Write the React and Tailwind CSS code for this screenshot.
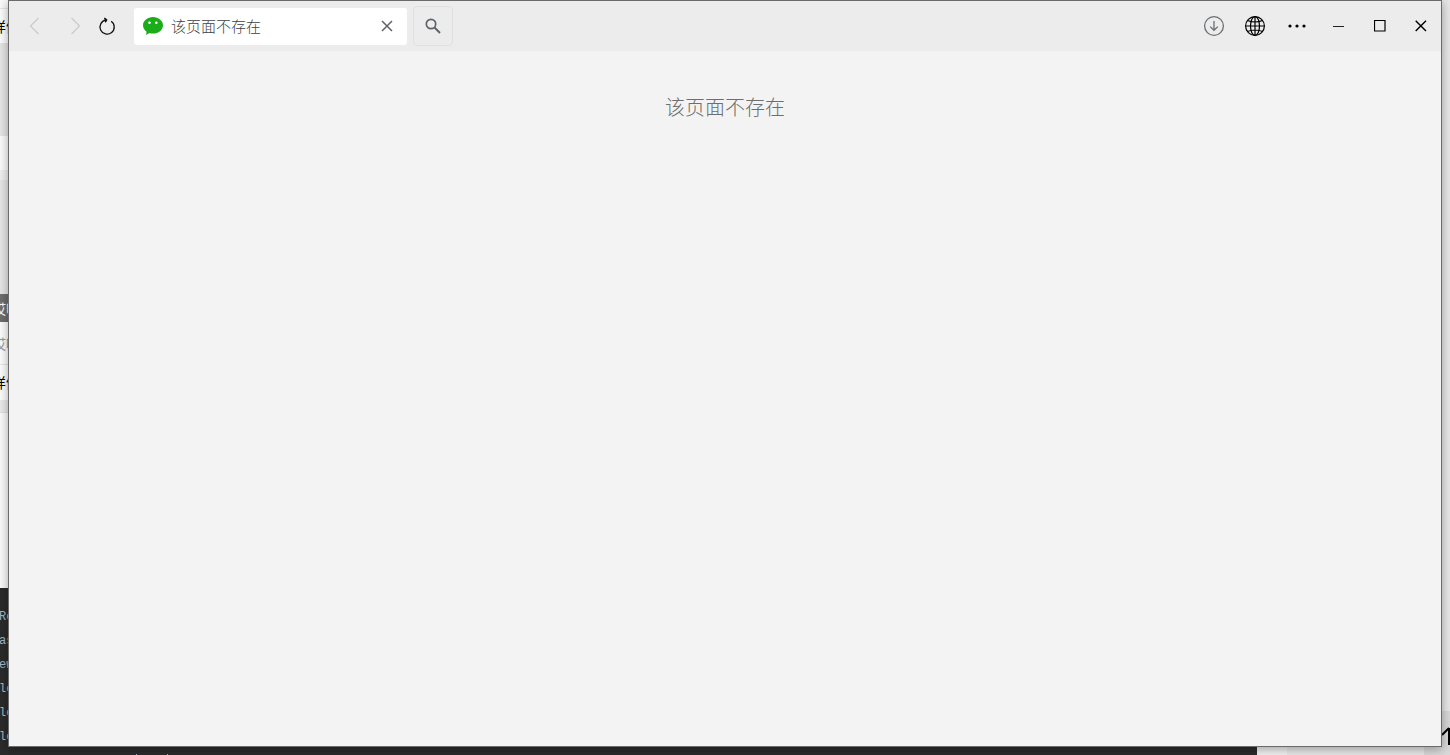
import React, { useState } from "react";

// Slices of the desktop that stay visible left of the window, top to bottom
const leftSlices = [
  { className: "h-2 bg-[#fafafa]" },
  { className: "h-[35px] bg-[#fdfdfd] border-t border-[#e6e6e6] text-black", text: "样例" },
  { className: "h-[93px] bg-[#e6e6e6]" },
  { className: "h-[34px] bg-[#fcfcfc]" },
  { className: "h-[10px] bg-[#f0f0f0]" },
  { className: "h-[114px] bg-[#e6e6e6]" },
  { className: "h-[28px] bg-[#6e6e6e] text-white", text: "哎呀" },
  { className: "h-[42px] bg-[#fdfdfd] text-[#999999]", text: "哎呀" },
  { className: "h-[36px] bg-[#fdfdfd] border-t border-[#e6e6e6] text-black", text: "样例" },
  { className: "h-[13px] bg-[#ebebeb] border-b border-[#e0e0e0]" },
  { className: "h-[175px] bg-[#fbfbfb]" },
];

const codeLines = ["Re", "as", "ew", "le", "le", "le"];

/**
 * Background content on the left edge, partly covered by the window.
 */
const LeftEdge = () => (
  <div className="flex w-2 shrink-0 flex-col overflow-hidden bg-[#2b2b2b]">
    {leftSlices.map((slice, index) => (
      <div
        key={index}
        className={`flex shrink-0 items-center text-[14px] ${slice.className}`}
      >
        {slice.text && (
          <span className="-ml-2 whitespace-nowrap">{slice.text}</span>
        )}
      </div>
    ))}
    <div className="min-h-0 flex-1 overflow-hidden pt-[17px] font-['Liberation_Mono','Noto_Sans_CJK_SC',monospace] text-[12px] leading-[24px] text-[#a9b7c6]">
      {codeLines.map((line, index) => (
        <div key={index} className="-ml-px">
          {line}
        </div>
      ))}
    </div>
  </div>
);

/**
 * Background content on the right edge with the "back to top" arrow.
 */
const RightEdge = () => (
  <div className="flex w-2 shrink-0 flex-col bg-[#e8e8e8]">
    <div className="flex-1" />
    <div className="flex h-9 items-end bg-[#d9d9d9]">
      <svg className="h-5 w-2" viewBox="0 0 8 20" fill="none" stroke="#000" strokeWidth="2">
        <path d="M0 8L7 1M7 1V18" />
      </svg>
    </div>
  </div>
);

/**
 * Background content below the window.
 */
const BottomEdge = () => (
  <div className="flex h-2 shrink-0">
    <div className="flex flex-1 items-end bg-[#2b2b2b] pl-[136px]">
      <span className="h-px w-px bg-[#a9b7c6]" />
      <span className="ml-[30px] h-px w-px bg-[#a9b7c6]" />
    </div>
    <div className="w-[30px] bg-[#f2f2f2]" />
    <div className="w-[137px] bg-[#e8e8e8]" />
    <div className="w-[26px] bg-[#d9d9d9]" />
  </div>
);

const WeChatIcon = () => (
  <svg className="h-5 w-5 shrink-0" viewBox="0 0 20 20">
    <path
      fill="#1aad19"
      d="M10 1C4.500 1 0 4.700 0 9.300c0 2.600 1.400 4.900 3.600 6.400L3.100 18.900 6.500 17c1.100.4 2.300.6 3.500.6 5.500 0 10-3.700 10-8.300S15.500 1 10 1z"
    />
    <circle cx="6.500" cy="6.700" r="1.300" fill="#fff" />
    <circle cx="13.300" cy="6.700" r="1.300" fill="#fff" />
  </svg>
);

const NavigationButtons = () => (
  <div className="flex items-center">
    <button type="button" aria-label="后退" disabled className="flex h-9 w-9 items-center justify-center">
      <svg className="h-5 w-5" viewBox="0 0 20 20" fill="none" stroke="#cccccc" strokeWidth="1.4">
        <path d="M13.500 2L5.500 10l8 8" />
      </svg>
    </button>
    <button type="button" aria-label="前进" disabled className="ml-1 flex h-9 w-9 items-center justify-center">
      <svg className="h-5 w-5" viewBox="0 0 20 20" fill="none" stroke="#cccccc" strokeWidth="1.4">
        <path d="M6.500 2l8 8-8 8" />
      </svg>
    </button>
    <button type="button" aria-label="刷新" className="flex h-9 w-7 items-center justify-center">
      <svg className="h-5 w-5" viewBox="0 0 20 20" fill="none" stroke="#111111" strokeWidth="1.3">
        <path d="M14.200 5.200A7.100 7.100 0 1 1 9 4" />
        <path d="M6.800 1.800L9.600 4 7.600 6.700z" transform="translate(.6 0)" fill="#111111" stroke="none" />
        <path d="M7.400 1.900L9.700 3.900 8.300 6.200" />
      </svg>
    </button>
  </div>
);

const WindowControls = () => (
  <div className="ml-auto flex items-center">
    <button type="button" aria-label="下载" className="flex h-9 w-[41px] items-center justify-center">
      <svg className="h-[22px] w-[22px]" viewBox="0 0 22 22" fill="none" stroke="#6b6e73" strokeWidth="1.3">
        <circle cx="11" cy="11" r="9.400" />
        <path d="M11 6v9.300M7.200 11.600L11 15.300l3.800-3.700" />
      </svg>
    </button>
    <button type="button" aria-label="用默认浏览器打开" className="flex h-9 w-[41px] items-center justify-center">
      <svg className="h-[22px] w-[22px]" viewBox="0 0 22 22" fill="none" stroke="#000" strokeWidth="1.2">
        <circle cx="11" cy="11" r="9.400" />
        <ellipse cx="11" cy="11" rx="4.500" ry="9.400" />
        <path d="M11 1.600v18.800M1.600 11h18.800M3.600 5.500c4 2 10.800 2 14.800 0M3.600 16.500c4-2 10.800-2 14.800 0" />
      </svg>
    </button>
    <button type="button" aria-label="更多" className="flex h-9 w-[43px] items-center justify-center">
      <svg className="h-5 w-5" viewBox="0 0 20 20" fill="#000">
        <circle cx="3" cy="10" r="1.600" />
        <circle cx="10" cy="10" r="1.600" />
        <circle cx="17" cy="10" r="1.600" />
      </svg>
    </button>
    <button type="button" aria-label="最小化" className="flex h-9 w-[41px] items-center justify-center">
      <svg className="h-3 w-3" viewBox="0 0 12 12" stroke="#222222" strokeWidth="1">
        <path d="M0 6.500h11" />
      </svg>
    </button>
    <button type="button" aria-label="最大化" className="flex h-9 w-[41px] items-center justify-center">
      <svg className="h-3 w-3" viewBox="0 0 12 12" fill="none" stroke="#000" strokeWidth="1.200">
        <path d="M0.500 0.500h10.500v10.500H0.500z" />
      </svg>
    </button>
    <button type="button" aria-label="关闭" className="flex h-9 w-[41px] items-center justify-center">
      <svg className="h-3 w-3" viewBox="0 0 12 12" stroke="#000" strokeWidth="1.400">
        <path d="M.7.700l10.300 10.300M11 .7L.7 11" />
      </svg>
    </button>
  </div>
);

/**
 * App Component
 *
 * Built-in browser window showing the "page does not exist" message.
 */
const App = () => {
  const [title, setTitle] = useState("该页面不存在"); // Text in the address box

  return (
    <div className="flex h-screen flex-col overflow-hidden font-['Noto_Sans_CJK_SC',sans-serif]">
      <div className="flex min-h-0 flex-1">
        <LeftEdge />
        <div className="relative z-10 order-2 flex min-w-0 flex-1 flex-col border border-[#6b6b6b] bg-[#f3f3f3] shadow-[0_2px_10px_rgba(0,0,0,0.35)]">
          {/* Title Bar */}
          <header className="flex h-[50px] shrink-0 items-center bg-[#ececec] pl-2">
            <NavigationButtons />
            <div className="ml-[13px] flex h-[37px] w-[273px] items-center rounded-[3px] bg-white pr-3 pl-[9px]">
              <WeChatIcon />
              <input
                type="text"
                aria-label="页面标题"
                value={title}
                onChange={(e) => setTitle(e.target.value)}
                className="ml-2 min-w-0 flex-1 bg-transparent text-[15px] font-light text-[#3c3f44] outline-none"
              />
              <button
                type="button"
                aria-label="清除"
                className="flex h-4 w-4 items-center justify-center"
                onClick={() => setTitle("")}
              >
                <svg className="h-3 w-3" viewBox="0 0 12 12" stroke="#5f6368" strokeWidth="1.500">
                  <path d="M1 1l10 10M11 1L1 11" />
                </svg>
              </button>
            </div>
            <button
              type="button"
              aria-label="搜索"
              className="ml-[6px] flex h-10 w-10 items-center justify-center rounded-[4px] border border-[#e0e0e0]"
            >
              <svg className="h-4 w-4" viewBox="0 0 16 16" fill="none" stroke="#5f6368">
                <circle cx="6" cy="6" r="4.700" strokeWidth="1.700" />
                <path d="M9.500 9.500l5.500 5.500" strokeWidth="2" />
              </svg>
            </button>
            <WindowControls />
          </header>

          {/* Page Content */}
          <main className="flex-1 pt-10 text-center">
            <p className="text-[20px] leading-[32px] font-light text-[#6e6e6e]">
              该页面不存在
            </p>
          </main>
        </div>
        <div className="order-3 flex">
          <RightEdge />
        </div>
      </div>
      <BottomEdge />
    </div>
  );
};

export default App;
